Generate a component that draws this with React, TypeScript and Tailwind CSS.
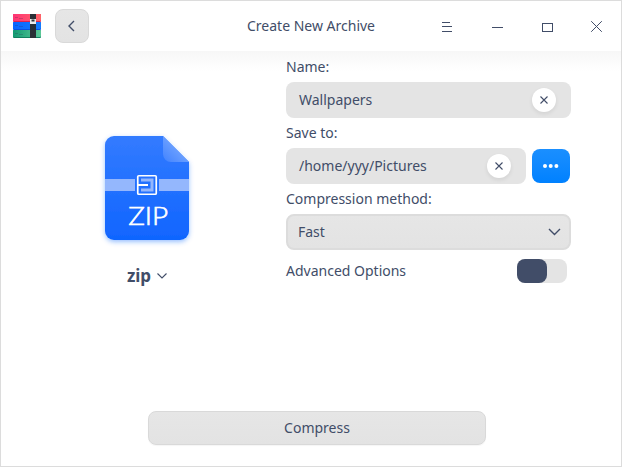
import React from 'react';

function AppLogo() {
  return (
    <svg width="28" height="24" viewBox="0 0 28 24" className="block" aria-hidden="true">
      <defs>
        <linearGradient id="logoRed" gradientUnits="userSpaceOnUse" x1="0" y1="0" x2="28" y2="0"><stop offset="0" stopColor="#ff3374" /><stop offset="1" stopColor="#ff6468" /></linearGradient>
        <linearGradient id="logoBlue" gradientUnits="userSpaceOnUse" x1="0" y1="0" x2="28" y2="0"><stop offset="0" stopColor="#0865ff" /><stop offset="1" stopColor="#127cff" /></linearGradient>
        <linearGradient id="logoGreen" gradientUnits="userSpaceOnUse" x1="0" y1="0" x2="28" y2="0"><stop offset="0" stopColor="#129a72" /><stop offset="1" stopColor="#5cc898" /></linearGradient>
      </defs>
      <rect y="0" width="28" height="8" rx="1" fill="#d92350" />
      <rect y="0" width="28" height="7" rx="1" fill="url(#logoRed)" />
      <rect y="8" width="28" height="8" rx="1" fill="#0a50e0" />
      <rect y="8" width="28" height="7" rx="1" fill="url(#logoBlue)" />
      <rect y="16" width="28" height="8" rx="1" fill="#10805f" />
      <rect y="16" width="28" height="7" rx="1" fill="url(#logoGreen)" />
      <path d="M2 3.500h3M6 4.500h4M2 11.500h3M6 12.500h4M2 19.500h3M6 20.500h4" stroke="#303050" strokeOpacity=".25" />
      <rect x="17" y="0" width="6" height="24" fill="#2a2f36" />
      <rect x="17" y="5" width="6" height="5" fill="#ececec" />
      <rect x="18.500" y="5.500" width="3" height="2" fill="#30343a" />
    </svg>
  );
}

function ZipFile() {
  return (
    <svg width="100" height="120" viewBox="0 0 100 120" className="block" aria-label="ZIP">
      <defs>
        <linearGradient id="page" x1="0" y1="0" x2="0" y2="1"><stop stopColor="#337bff" /><stop offset="1" stopColor="#1065ff" /></linearGradient>
        <linearGradient id="fold" x1="0" y1="1" x2=".55" y2=".45"><stop stopColor="#4082ff" /><stop offset="1" stopColor="#6ca0ff" /></linearGradient>
        <filter id="glow" x="-20%" y="-20%" width="140%" height="140%"><feDropShadow dx="0" dy="2" stdDeviation="2.6" floodColor="#1065ff" floodOpacity=".4" /></filter>
      </defs>
      <path d="M17 8h49l26 26v69a9 9 0 0 1-9 9H17a9 9 0 0 1-9-9V17a9 9 0 0 1 9-9z" fill="url(#page)" filter="url(#glow)" />
      <path d="M66 8l26 26H74a8 8 0 0 1-8-8z" fill="url(#fold)" />
      <path d="M8 51h30v12H8zM62 51h30v12H62z" fill="#94b7fd" />
      <path d="M44 52h11v10H44" fill="none" stroke="#94b7fd" strokeWidth="3" />
      <rect x="40.750" y="47.750" width="18.500" height="18.500" rx="1" fill="none" stroke="#fff" strokeWidth="1.700" />
      <path d="M41 57h10" stroke="#fff" strokeWidth="2" />
      <text x="31.200" y="97" textLength="40" lengthAdjust="spacingAndGlyphs" fontSize="25" fill="#fff" className="font-[Lato] font-light" stroke="#fff" strokeWidth=".6">ZIP</text>
    </svg>
  );
}

function ClearButton() {
  return (
    <button aria-label="Clear" className="flex size-6 items-center justify-center rounded-full bg-white shadow-[0_2px_4px_rgba(0,0,0,0.08)]">
      <svg width="8" height="8" viewBox="0 0 8 8" stroke="#414d68" strokeWidth="1.100"><path d="M.5.5l7 7M7.500.5l-7 7" /></svg>
    </button>
  );
}

export default function App() {
  return (
    <div className="flex h-[467px] w-[622px] flex-col border border-[#dcdcdc] bg-white font-['Noto_Sans',sans-serif] text-sm leading-5 text-[#414d68]">
      <header className="grid h-[50px] shrink-0 grid-cols-[1fr_auto_1fr] items-center">
        <div className="flex items-center gap-3.5 pl-3">
          <AppLogo />
          <button aria-label="Back" className="flex size-[34px] items-center justify-center rounded-lg border border-[#d9d9d9] bg-linear-to-b from-[#e6e6e6] to-[#e3e3e3]">
            <svg width="8" height="12" viewBox="0 0 8 12" fill="none" stroke="#414d68" strokeWidth="1.400"><path d="M6 1L1 6l5 5" /></svg>
          </button>
        </div>
        <h1>Create New Archive</h1>
        <div className="flex items-center justify-end pr-[17px]">
          <svg width="162" height="14" viewBox="0 0 162 14" fill="none" stroke="#414d68" shapeRendering="crispEdges">
            <path d="M0 3.500h8M0 7.500h10M0 12.500h10M50 8.500h11" />
            <path d="M100.500 4.500h10v8h-10z" />
            <path d="M149.200 2.200l10.600 10.600M159.800 2.200l-10.600 10.600" shapeRendering="auto" />
          </svg>
        </div>
      </header>
      <main className="flex flex-1 flex-col bg-linear-to-b from-[#f7f7f7] to-white to-[20px]">
        <div className="flex h-[359px]">
          <section className="flex w-[285px] flex-col items-center pl-[7px] pt-[77px]">
            <div className="mr-px w-[100px]"><ZipFile /></div>
            <button className="mt-4 flex items-center gap-1.5 text-[17px] leading-6 font-bold">
              zip
              <svg width="10" height="6" viewBox="0 0 10 6" fill="none" stroke="#414d68" strokeWidth="1.100"><path d="M.5.5L5 5 9.500.5" /></svg>
            </button>
          </section>
          <section className="flex w-[285px] flex-col pt-1.5">
            <label className="mb-[5px]">Name:</label>
            <div className="flex h-9 items-center justify-between rounded-lg bg-[#e4e4e4] pr-[15px] pl-[13px]">
              <span>Wallpapers</span>
              <ClearButton />
            </div>
            <label className="my-[5px]">Save to:</label>
            <div className="flex items-center gap-1.5">
              <div className="flex h-9 w-60 items-center justify-between rounded-lg bg-[#e4e4e4] pr-[15px] pl-[13px]">
                <span>/home/yyy/Pictures</span>
                <ClearButton />
              </div>
              <button aria-label="Browse" className="flex h-[34px] w-[38px] items-center justify-center rounded-lg bg-linear-to-b from-[#1a8fff] to-[#0081ff]">
                <svg width="16" height="4" viewBox="0 0 16 4" fill="#fff"><circle cx="2" cy="2" r="2" /><circle cx="7.700" cy="2" r="2" /><circle cx="13.400" cy="2" r="2" /></svg>
              </button>
            </div>
            <label className="my-[5px]">Compression method:</label>
            <div className="flex h-9 items-center justify-between rounded-lg border-2 border-[#dcdcdc] bg-linear-to-b from-[#e6e6e6] to-[#e3e3e3] pr-2 pl-2.5">
              <span>Fast</span>
              <svg width="13" height="8" viewBox="0 0 13 8" fill="none" stroke="#414d68" strokeWidth="1.400"><path d="M1 1l5.500 5.500L12 1" /></svg>
            </div>
            <div className="mt-[9px] flex items-center justify-between pr-1">
              <span>Advanced Options</span>
              <div role="switch" aria-checked="false" className="h-6 w-[50px] rounded-lg bg-[#e4e4e4]">
                <div className="h-6 w-[30px] rounded-lg bg-[#414d68]" />
              </div>
            </div>
          </section>
        </div>
        <button className="mt-px ml-[147px] h-[34px] w-[338px] rounded-lg border border-[#d9d9d9] bg-linear-to-b from-[#e6e6e6] to-[#e3e3e3] shadow-[0_1px_1px_rgba(0,0,0,0.04)]">Compress</button>
      </main>
    </div>
  );
}
